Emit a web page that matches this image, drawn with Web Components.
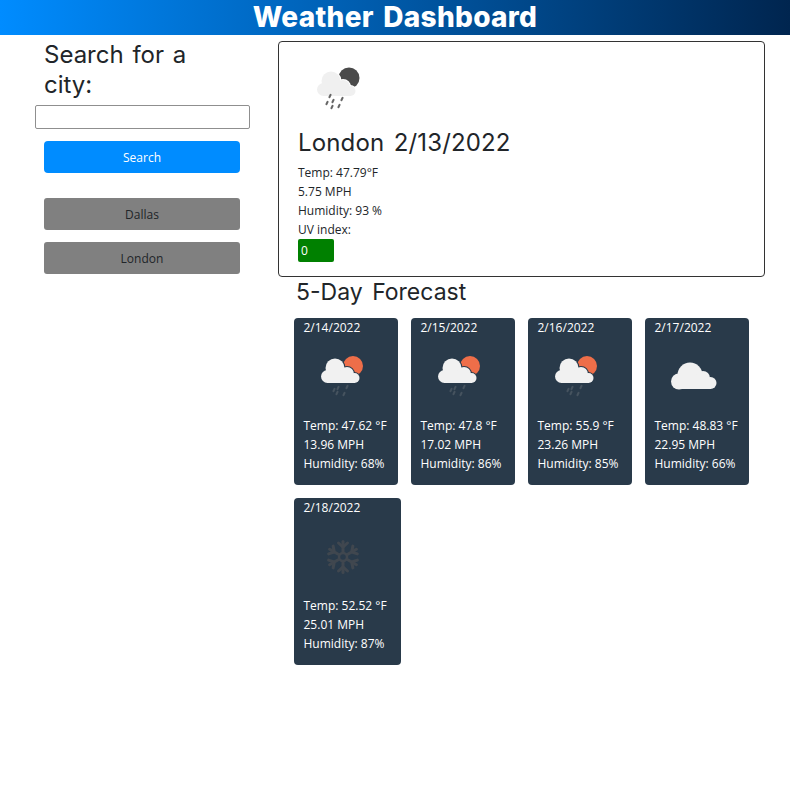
<!DOCTYPE html>
<html lang="en">
<head>
<meta charset="utf-8">
<title>Weather Dashboard</title>
<style>
  html, body { margin: 0; padding: 0; background: #fff; }
  body { font-family: "Open Sans", "Liberation Sans", sans-serif; color: #212529; }
  .layout { display: flex; align-items: flex-start; }
</style>
</head>
<body>
<app-header>Weather Dashboard</app-header>
<div class="layout">
  <search-panel>
    <city-button>Dallas</city-button>
    <city-button>London</city-button>
  </search-panel>
  <main-column>
    <current-weather city="London 2/13/2022" temp="Temp: 47.79°F" wind="5.75 MPH" humidity="Humidity: 93 %" uv="0"></current-weather>
    <forecast-row>
      <forecast-card date="2/14/2022" icon="rain" temp="Temp: 47.62 °F" wind="13.96 MPH" humidity="Humidity: 68%"></forecast-card>
      <forecast-card date="2/15/2022" icon="rain" temp="Temp: 47.8 °F" wind="17.02 MPH" humidity="Humidity: 86%"></forecast-card>
      <forecast-card date="2/16/2022" icon="rain" temp="Temp: 55.9 °F" wind="23.26 MPH" humidity="Humidity: 85%"></forecast-card>
      <forecast-card date="2/17/2022" icon="cloud" temp="Temp: 48.83 °F" wind="22.95 MPH" humidity="Humidity: 66%"></forecast-card>
      <forecast-card class="wide" date="2/18/2022" icon="snow" temp="Temp: 52.52 °F" wind="25.01 MPH" humidity="Humidity: 87%"></forecast-card>
    </forecast-row>
  </main-column>
</div>

<script>
const HEAD_FONT = 'Inter, "Noto Sans", sans-serif';

class AppHeader extends HTMLElement {
  constructor() {
    super();
    this.attachShadow({ mode: 'open' });
    this.shadowRoot.innerHTML = `
      <style>
        :host {
          display: block;
          height: 35px;
          background: linear-gradient(90deg, #008cff, #00254f);
          color: #fff;
          text-align: center;
          font-family: ${HEAD_FONT};
          font-weight: 800;
          font-size: 28px;
          line-height: 34px;
          letter-spacing: .3px;
          word-spacing: 3px;
        }
      </style>
      <slot></slot>`;
  }
}

class SearchPanel extends HTMLElement {
  constructor() {
    super();
    this.attachShadow({ mode: 'open' });
    this.shadowRoot.innerHTML = `
      <style>
        :host {
          display: block;
          flex: 0 0 278px;
          min-width: 0;
          box-sizing: border-box;
          padding: 5px 38px 0 44px;
        }
        h2 {
          margin: 0 0 5px;
          width: 170px;
          font-family: ${HEAD_FONT};
          font-weight: 400;
          font-size: 24px;
          line-height: 30px;
          word-spacing: 2px;
          color: #212529;
        }
        input {
          display: block;
          box-sizing: border-box;
          width: 215px;
          height: 24px;
          margin: 0 0 12px -9px;
          border: 1px solid #8f8f8f;
          border-radius: 2px;
          background: #fff;
        }
        button {
          display: block;
          width: 196px;
          height: 32px;
          margin-bottom: 25px;
          padding: 0;
          border: 0;
          border-radius: 4px;
          background: #008cff;
          color: #fff;
          font: 12px "Open Sans", sans-serif;
        }
        .history { display: flex; flex-direction: column; gap: 12px; }
      </style>
      <h2>Search for a city:</h2>
      <input type="text" aria-label="City">
      <button>Search</button>
      <div class="history"><slot></slot></div>`;
  }
}

class CityButton extends HTMLElement {
  constructor() {
    super();
    this.attachShadow({ mode: 'open' });
    this.shadowRoot.innerHTML = `
      <style>
        :host { display: block; }
        button {
          display: block;
          width: 196px;
          height: 32px;
          padding: 0;
          border: 0;
          border-radius: 3px;
          background: #808080;
          color: #212529;
          font: 12px "Open Sans", sans-serif;
        }
      </style>
      <button><slot></slot></button>`;
  }
}

class MainColumn extends HTMLElement {
  constructor() {
    super();
    this.attachShadow({ mode: 'open' });
    this.shadowRoot.innerHTML = `
      <style>
        :host { display: block; flex: 0 0 487px; padding-top: 6px; }
      </style>
      <slot></slot>`;
  }
}

// same cloud shape for the day icons, drawn twice so it cuts a halo out of the sun
function cloudShape(dy, fill, halo) {
  const parts = `
    <circle cx="21" cy="${18 + dy}" r="9.5"/>
    <circle cx="13.5" cy="${26.5 + dy}" r="6.5"/>
    <circle cx="33" cy="${24 + dy}" r="7"/>
    <circle cx="40.5" cy="${28 + dy}" r="5"/>
    <rect x="13" y="${24 + dy}" width="28" height="9"/>`;
  return `<g fill="${halo}" stroke="${halo}" stroke-width="2">${parts}</g><g fill="${fill}">${parts}</g>`;
}

function drops(points, color) {
  return points.map(p =>
    `<line x1="${p[0] + .6}" y1="${p[1] - 1.2}" x2="${p[0] - .6}" y2="${p[1] + 1.2}" stroke="${color}" stroke-width="2" stroke-linecap="round"/>`
  ).join('');
}

const BG_CARD = '#293a4a';

function flake() {
  const arm = `
    <line x1="0" y1="0" x2="0" y2="-15.5"/>
    <polyline points="-4.5,-14 0,-10 4.5,-14" fill="none"/>`;
  let arms = '';
  for (let a = 0; a < 360; a += 60) arms += `<g transform="rotate(${a})">${arm}</g>`;
  return `<g transform="translate(29 27)" stroke="#40474f" stroke-width="3" stroke-linecap="round">${arms}
    <circle r="4" fill="${BG_CARD}" stroke-width="2.5"/></g>`;
}

const ICONS = {
  moonrain: `<circle cx="39" cy="18" r="10.5" fill="#4a4a4a"/>`
    + cloudShape(3, '#f0f0f0', '#fff')
    + drops([[20,36],[32,39],[17,43],[23,41],[22,47],[29,46]], '#666'),
  rain: `<circle cx="39" cy="16" r="10" fill="#ee6e49"/>`
    + cloudShape(0, '#f1f1f1', BG_CARD)
    + drops([[24,38],[33,37],[23,43],[30,44],[20,40]], '#46535f'),
  cloud: `<g fill="#f1f1f1">
      <circle cx="25" cy="25" r="12.5"/>
      <circle cx="14" cy="31.5" r="8"/>
      <circle cx="38" cy="28" r="7"/>
      <circle cx="45.5" cy="33" r="6"/>
      <rect x="14" y="28" width="32" height="11"/>
    </g>`,
  snow: flake()
};

class WeatherIcon extends HTMLElement {
  connectedCallback() {
    if (!this.shadowRoot) this.attachShadow({ mode: 'open' });
    const name = this.getAttribute('name');
    this.shadowRoot.innerHTML = `
      <style>
        :host { display: block; width: 60px; height: 50px; }
        svg { display: block; overflow: visible; }
      </style>
      <svg width="60" height="50" viewBox="0 0 60 50" aria-hidden="true">${ICONS[name] || ''}</svg>`;
  }
}

class CurrentWeather extends HTMLElement {
  connectedCallback() {
    if (!this.shadowRoot) this.attachShadow({ mode: 'open' });
    const a = n => this.getAttribute(n) || '';
    this.shadowRoot.innerHTML = `
      <style>
        :host {
          display: block;
          box-sizing: border-box;
          height: 236px;
          border: 1px solid #333;
          border-radius: 4px;
          padding: 18px 19px 0;
          font-size: 12px;
          line-height: 19px;
          color: #212529;
        }
        weather-icon { margin-left: 12px; }
        h2 {
          margin: 15px 0 0;
          font-family: ${HEAD_FONT};
          font-weight: 400;
          font-size: 24px;
          line-height: 36px;
          letter-spacing: .15px;
          word-spacing: 2.5px;
        }
        p { margin: 0; }
        .stats { margin-top: 2px; }
        .uv {
          display: block;
          box-sizing: border-box;
          width: 36px;
          height: 23px;
          padding-left: 3px;
          border-radius: 2px;
          background: #008000;
          color: #fff;
          line-height: 23px;
        }
      </style>
      <weather-icon name="moonrain"></weather-icon>
      <h2>${a('city')}</h2>
      <div class="stats">
        <p>${a('temp')}</p>
        <p>${a('wind')}</p>
        <p>${a('humidity')}</p>
        <p>UV index:</p>
      </div>
      <span class="uv">${a('uv')}</span>`;
  }
}

class ForecastRow extends HTMLElement {
  constructor() {
    super();
    this.attachShadow({ mode: 'open' });
    this.shadowRoot.innerHTML = `
      <style>
        :host { display: block; }
        h2 {
          margin: 0 0 11px 18px;
          font-family: ${HEAD_FONT};
          font-weight: 400;
          font-size: 23px;
          line-height: 30px;
          word-spacing: 3px;
          color: #212529;
        }
        .cards {
          display: flex;
          flex-wrap: wrap;
          gap: 13px;
          margin-left: 16px;
        }
      </style>
      <h2>5-Day Forecast</h2>
      <div class="cards"><slot></slot></div>`;
  }
}

class ForecastCard extends HTMLElement {
  connectedCallback() {
    if (!this.shadowRoot) this.attachShadow({ mode: 'open' });
    const a = n => this.getAttribute(n) || '';
    this.shadowRoot.innerHTML = `
      <style>
        :host {
          display: block;
          box-sizing: border-box;
          width: 104px;
          height: 167px;
          padding: 0 0 0 9.5px;
          border-radius: 4px;
          background: ${BG_CARD};
          color: #fff;
          font-size: 12px;
          line-height: 19px;
        }
        :host(.wide) { width: 106.5px; }
        weather-icon { margin: 13px 0 0 10.5px; }
        p { margin: 0; }
        .stats { margin-top: 16px; }
      </style>
      <div class="date">${a('date')}</div>
      <weather-icon name="${a('icon')}"></weather-icon>
      <div class="stats">
        <p>${a('temp')}</p>
        <p>${a('wind')}</p>
        <p>${a('humidity')}</p>
      </div>`;
  }
}

customElements.define('app-header', AppHeader);
customElements.define('search-panel', SearchPanel);
customElements.define('city-button', CityButton);
customElements.define('main-column', MainColumn);
customElements.define('weather-icon', WeatherIcon);
customElements.define('current-weather', CurrentWeather);
customElements.define('forecast-row', ForecastRow);
customElements.define('forecast-card', ForecastCard);
</script>
</body>
</html>
